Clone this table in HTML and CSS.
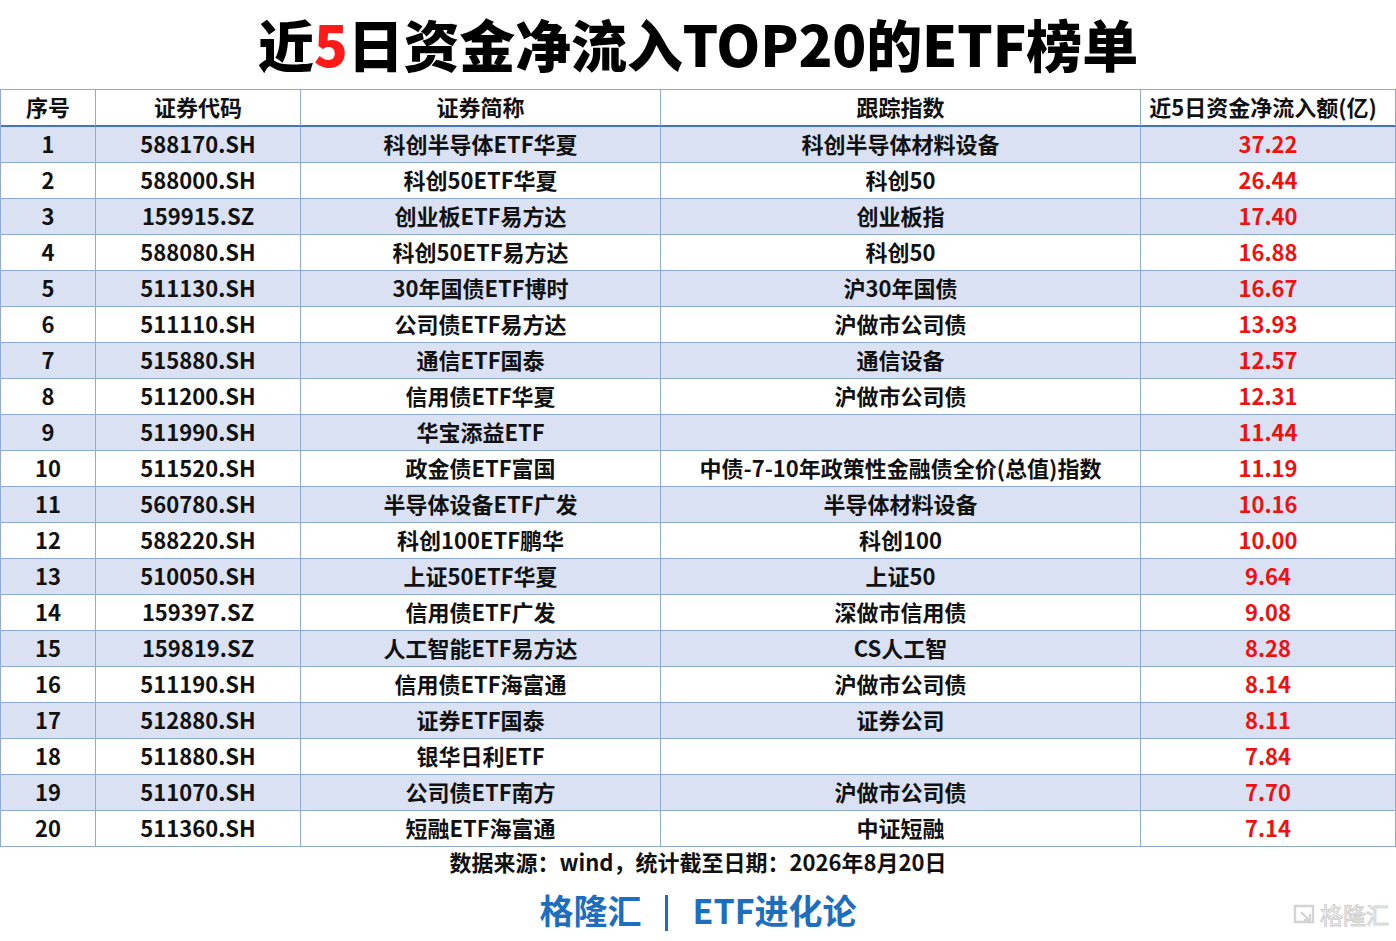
FILE: index.html
```html
<!DOCTYPE html>
<html lang="zh-CN">
<head>
<meta charset="utf-8">
<title>近5日资金净流入TOP20的ETF榜单</title>
<link rel="stylesheet" href="styles.css">
</head>
<body>
<div class="page">
  <h1 class="title">近<span class="red">5</span>日资金净流入TOP20的ETF榜单</h1>
  <div class="table">
    <div class="row head">
      <div class="c">序号</div><div class="c">证券代码</div><div class="c">证券简称</div><div class="c">跟踪指数</div><div class="c last-head">近5日资金净流入额(亿)</div>
    </div>
    <div class="row alt"><div class="c">1</div><div class="c">588170.SH</div><div class="c">科创半导体ETF华夏</div><div class="c">科创半导体材料设备</div><div class="c num">37.22</div></div>
    <div class="row"><div class="c">2</div><div class="c">588000.SH</div><div class="c">科创50ETF华夏</div><div class="c">科创50</div><div class="c num">26.44</div></div>
    <div class="row alt"><div class="c">3</div><div class="c">159915.SZ</div><div class="c">创业板ETF易方达</div><div class="c">创业板指</div><div class="c num">17.40</div></div>
    <div class="row"><div class="c">4</div><div class="c">588080.SH</div><div class="c">科创50ETF易方达</div><div class="c">科创50</div><div class="c num">16.88</div></div>
    <div class="row alt"><div class="c">5</div><div class="c">511130.SH</div><div class="c">30年国债ETF博时</div><div class="c">沪30年国债</div><div class="c num">16.67</div></div>
    <div class="row"><div class="c">6</div><div class="c">511110.SH</div><div class="c">公司债ETF易方达</div><div class="c">沪做市公司债</div><div class="c num">13.93</div></div>
    <div class="row alt"><div class="c">7</div><div class="c">515880.SH</div><div class="c">通信ETF国泰</div><div class="c">通信设备</div><div class="c num">12.57</div></div>
    <div class="row"><div class="c">8</div><div class="c">511200.SH</div><div class="c">信用债ETF华夏</div><div class="c">沪做市公司债</div><div class="c num">12.31</div></div>
    <div class="row alt"><div class="c">9</div><div class="c">511990.SH</div><div class="c">华宝添益ETF</div><div class="c"></div><div class="c num">11.44</div></div>
    <div class="row"><div class="c">10</div><div class="c">511520.SH</div><div class="c">政金债ETF富国</div><div class="c">中债-7-10年政策性金融债全价(总值)指数</div><div class="c num">11.19</div></div>
    <div class="row alt"><div class="c">11</div><div class="c">560780.SH</div><div class="c">半导体设备ETF广发</div><div class="c">半导体材料设备</div><div class="c num">10.16</div></div>
    <div class="row"><div class="c">12</div><div class="c">588220.SH</div><div class="c">科创100ETF鹏华</div><div class="c">科创100</div><div class="c num">10.00</div></div>
    <div class="row alt"><div class="c">13</div><div class="c">510050.SH</div><div class="c">上证50ETF华夏</div><div class="c">上证50</div><div class="c num">9.64</div></div>
    <div class="row"><div class="c">14</div><div class="c">159397.SZ</div><div class="c">信用债ETF广发</div><div class="c">深做市信用债</div><div class="c num">9.08</div></div>
    <div class="row alt"><div class="c">15</div><div class="c">159819.SZ</div><div class="c">人工智能ETF易方达</div><div class="c">CS人工智</div><div class="c num">8.28</div></div>
    <div class="row"><div class="c">16</div><div class="c">511190.SH</div><div class="c">信用债ETF海富通</div><div class="c">沪做市公司债</div><div class="c num">8.14</div></div>
    <div class="row alt"><div class="c">17</div><div class="c">512880.SH</div><div class="c">证券ETF国泰</div><div class="c">证券公司</div><div class="c num">8.11</div></div>
    <div class="row"><div class="c">18</div><div class="c">511880.SH</div><div class="c">银华日利ETF</div><div class="c"></div><div class="c num">7.84</div></div>
    <div class="row alt"><div class="c">19</div><div class="c">511070.SH</div><div class="c">公司债ETF南方</div><div class="c">沪做市公司债</div><div class="c num">7.70</div></div>
    <div class="row"><div class="c">20</div><div class="c">511360.SH</div><div class="c">短融ETF海富通</div><div class="c">中证短融</div><div class="c num">7.14</div></div>
  </div>
  <p class="source">数据来源：wind，统计截至日期：2026年8月20日</p>
  <p class="brand"><span>格隆汇</span><span class="bar"></span><span>ETF进化论</span></p>
  <div class="watermark">
    <svg class="wm-icon" viewBox="0 0 24 24" width="24" height="24" aria-hidden="true">
      <path d="M3 4h18v16H3z" fill="none" stroke="#d4d4d4" stroke-width="2.4"/>
      <path d="M9 10l8 8M12 18h6v-6" fill="none" stroke="#d4d4d4" stroke-width="2.2"/>
    </svg>
    <span class="wm-text">格隆汇</span>
  </div>
</div>
</body>
</html>
```

FILE: styles.css
```css
html, body {
  margin: 0;
  padding: 0;
  background: #ffffff;
}

body {
  font-family: "Noto Sans CJK SC", "Noto Sans", sans-serif;
  color: #111111;
}

.page {
  position: relative;
  width: 1396px;
  height: 941px;
  overflow: hidden;
}

.title {
  margin: 0;
  height: 89px;
  line-height: 86px;
  text-align: center;
  font-size: 56px;
  font-weight: 900;
  letter-spacing: -0.2px;
  color: #000;
}

.red {
  color: #ff1a1a;
}

.table {
  border-top: 1px solid #8ea9db;
  border-left: 1px solid #8ea9db;
  width: 1396px;
  box-sizing: border-box;
}

.row {
  display: grid;
  grid-template-columns: 95px 205px 360px 480px 255px;
  height: 36px;
}

.row.alt {
  background: #d9e1f2;
}

.row.head {
  height: 37px;
}

.row.head .c {
  border-bottom: 2px solid #4472c4;
}

.row.head .last-head {
  padding-right: 10px;
}

.c {
  box-sizing: border-box;
  border-right: 1px solid #8ea9db;
  border-bottom: 1px solid #8ea9db;
  display: flex;
  align-items: center;
  justify-content: center;
  font-size: 22px;
  font-weight: 700;
  white-space: nowrap;
  padding-bottom: 3px;
}

.num {
  color: #f01010;
}

.source {
  margin: 0;
  height: 36px;
  line-height: 29px;
  text-align: center;
  font-size: 22px;
  font-weight: 700;
}

.brand {
  margin: 2px 0 0;
  display: flex;
  justify-content: center;
  align-items: center;
  gap: 24px;
  font-size: 34px;
  line-height: 50px;
  font-weight: 700;
  color: #1d6fbe;
}

.bar {
  width: 3px;
  height: 36px;
  background: #1d6fbe;
  margin-top: 6px;
}

.watermark {
  position: absolute;
  right: 7px;
  bottom: 10px;
  display: flex;
  align-items: center;
  gap: 4px;
}

.wm-text {
  font-size: 23px;
  font-weight: 400;
  color: #ffffff;
  -webkit-text-stroke: 1px #cfcfcf;
}
```
